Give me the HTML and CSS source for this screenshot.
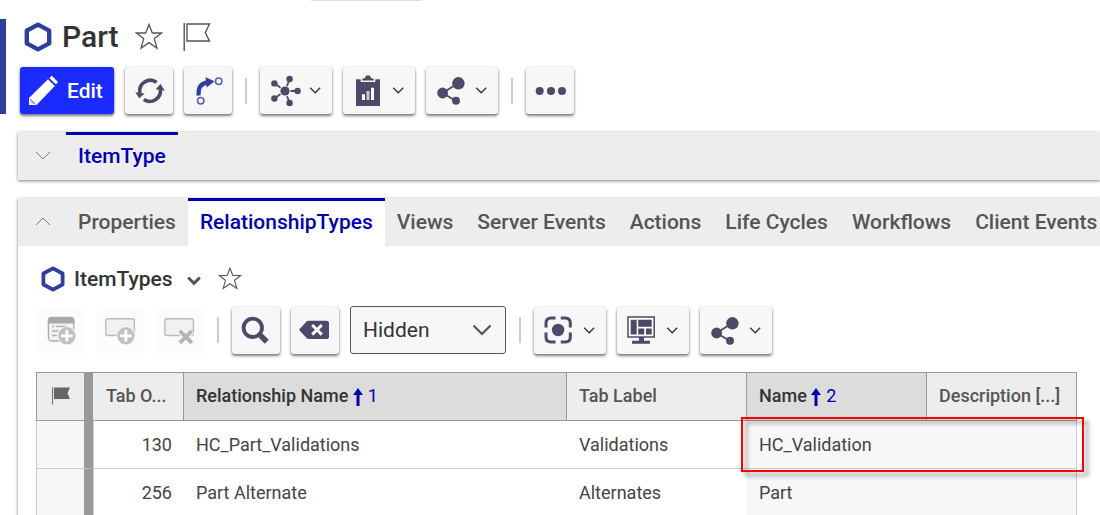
FILE: index.html
```html
<!DOCTYPE html>
<html lang="en">
<head>
<meta charset="utf-8">
<title>Part</title>
<link rel="stylesheet" href="styles.css">
</head>
<body>
<svg class="defs" aria-hidden="true">
  <symbol id="hexagon" viewBox="0 0 28 30"><path d="M14 2.6 25.2 8.6V21.4L14 27.4 2.8 21.4V8.6Z" fill="none" stroke="#303f9f" stroke-width="4.4" stroke-linejoin="round"/></symbol>
  <symbol id="star" viewBox="0 0 28 27"><path d="M14 1.5 17.3 10H26.7L19.3 15.6 22 25.2 14 19.6 6 25.2 8.7 15.6 1.3 10H10.7Z" fill="none" stroke="#555" stroke-width="1.3"/></symbol>
  <symbol id="share" viewBox="0 0 48 47"><path d="M32.5 16 16.5 26 30 34" fill="none" stroke="#4b4a68" stroke-width="1.8"/><g fill="#4b4a68"><circle cx="32.4" cy="16.3" r="6.2"/><circle cx="16.6" cy="26" r="5.4"/><circle cx="30" cy="33.7" r="4"/></g></symbol>
  <symbol id="chevron" viewBox="0 0 24 47"><path d="M2.2 20.8 7.2 25.8 12.2 20.8" fill="none" stroke="#333" stroke-width="1.3"/></symbol>
</svg>

<div class="window-edge"></div>

<header class="item-header">
  <div class="title-row">
    <svg class="title-hex"><use href="#hexagon"/></svg>
    <h1 class="title">Part</h1>
    <button class="plain title-star" aria-label="Favorite"><svg width="28" height="27"><use href="#star"/></svg></button>
    <button class="plain title-flag" aria-label="Flag"><svg width="28" height="28" viewBox="0 0 28 28"><path d="M1.2 0V28M4 1H26.5L22.3 9.5 26.5 18H4Z" fill="none" stroke="#555" stroke-width="1.4"/></svg></button>
  </div>
  <div class="toolbar">
    <button class="btn btn-primary"><svg class="icon" viewBox="0 0 48 47"><g fill="#fff"><path d="M9 38V31L28 12.3 34.8 19 16.5 38Z"/><path d="M29.4 11 31.8 8.8 38 15 36 17.6Z"/></g><path d="M10 32 15.4 37.2M11 34.6 13 36.6" stroke="#1b2bff" stroke-width=".8"/></svg><span class="btn-text">Edit</span></button>
    <button class="btn" aria-label="Refresh"><svg class="icon" viewBox="0 0 48 47"><g fill="none" stroke="#4b4a68" stroke-width="3.6"><path d="M14.9 26A10.6 10.6 0 0 1 31.6 15.4"/><path d="M35.3 22A10.6 10.6 0 0 1 18.8 32.4"/></g><path d="M10.3 25.2 19.8 26.6 14.2 31.2ZM30.6 22.3 35.6 17 39.8 23.8Z" fill="#4b4a68"/></svg></button>
    <button class="btn" aria-label="Promote"><svg class="icon" viewBox="0 0 48 47"><path d="M14.6 28.5C14 21 17 16.2 24 15.2" fill="none" stroke="#303f9f" stroke-width="4.2"/><path d="M21.5 10.2 30.6 14.2 22.6 20.5Z" fill="#303f9f"/><g fill="none" stroke="#5360bd" stroke-width="1.5"><circle cx="16.7" cy="33.7" r="3.2"/><circle cx="34.7" cy="14.2" r="3.2"/></g></svg></button>
    <span class="sep"></span>
    <button class="btn" aria-label="Structure"><svg class="icon" viewBox="0 0 48 47"><path d="M25 24 14.3 16.3M25 24 29.7 12M25 24H37.7M25 24 29.7 36M25 24 14.3 31.5" stroke="#4b4a68" stroke-width="1.8"/><circle cx="25" cy="24" r="5.6" fill="#f7f7f7"/><g fill="#4b4a68"><circle cx="25" cy="24" r="4.6"/><circle cx="14.4" cy="16.4" r="3.2"/><circle cx="29.6" cy="12" r="3.2"/><circle cx="37.6" cy="24" r="3.2"/><circle cx="29.6" cy="36" r="3.2"/><circle cx="14.4" cy="31.5" r="3.2"/></g></svg><svg class="caret"><use href="#chevron"/></svg></button>
    <button class="btn" aria-label="Reports"><svg class="icon" viewBox="0 0 48 47"><path d="M13 12.3H37V39H13Z" fill="#4b4a68"/><path d="M17.7 11.5H32.3V15H17.7Z" fill="#f7f7f7"/><path d="M19 13.6C19 11.2 21.5 11.8 22.2 10.6 22.6 7.6 27.4 7.6 27.8 10.6 28.5 11.8 31 11.2 31 13.6Z" fill="#4b4a68"/><path d="M19 27.3H22V33H19ZM28 20.7H31V33H28Z" fill="#fff"/><path d="M23.5 24H26.5V33H23.5Z" fill="#c9c8d4"/></svg><svg class="caret"><use href="#chevron"/></svg></button>
    <button class="btn" aria-label="Share"><svg class="icon"><use href="#share"/></svg><svg class="caret"><use href="#chevron"/></svg></button>
    <span class="sep"></span>
    <button class="btn" aria-label="More"><svg class="icon" viewBox="0 0 48 47"><g fill="#4b4a68"><circle cx="13.7" cy="24" r="4"/><circle cx="25" cy="24" r="4"/><circle cx="36" cy="24" r="4"/></g></svg></button>
  </div>
</header>

<section class="panel">
  <div class="tabs">
    <button class="plain toggle" aria-label="Expand"><svg width="16" height="10" viewBox="0 0 16 10"><path d="M1 1 8 8 15 1" fill="none" stroke="#777" stroke-width="1"/></svg></button>
    <button class="tab tab-active">ItemType</button>
  </div>
</section>

<section class="panel">
  <div class="tabs">
    <button class="plain toggle" aria-label="Collapse"><svg width="16" height="10" viewBox="0 0 16 10"><path d="M1 8 8 1 15 8" fill="none" stroke="#777" stroke-width="1"/></svg></button>
    <button class="tab">Properties</button>
    <button class="tab tab-active tab-open">RelationshipTypes</button>
    <button class="tab">Views</button>
    <button class="tab">Server Events</button>
    <button class="tab">Actions</button>
    <button class="tab">Life Cycles</button>
    <button class="tab">Workflows</button>
    <button class="tab">Client Events</button>
  </div>

  <div class="panel-body">
    <div class="sub-title-row">
      <svg class="sub-hex"><use href="#hexagon"/></svg>
      <h2 class="sub-title">ItemTypes</h2>
      <button class="plain sub-caret" aria-label="Menu"><svg width="14" height="10" viewBox="0 0 14 10"><path d="M1.2 1.5 7 7.3 12.8 1.5" fill="none" stroke="#555" stroke-width="3"/></svg></button>
      <button class="plain sub-star" aria-label="Favorite"><svg width="24" height="23"><use href="#star"/></svg></button>
    </div>

    <div class="toolbar sub-toolbar">
      <button class="btn" disabled aria-label="New item"><svg class="icon" viewBox="0 0 48 47"><rect x="10.4" y="11" width="25.4" height="23" rx="3.5" fill="#f2f2f2" stroke="#aaa" stroke-width="1.3"/><path d="M9.8 16.6V13.5Q9.8 9.7 13.5 9.7H32.7Q36.4 9.7 36.4 13.5V16.6Z" fill="#a9a9a9"/><path d="M14 19.5H16M18 19.5H29M14 24H21M14 28.5H19" stroke="#b0b0b0" stroke-width="1.5"/><circle cx="28.9" cy="28.8" r="9.6" fill="#fcfcfc"/><circle cx="28.9" cy="28.8" r="8.7" fill="#c1c1c1"/><path d="M28.9 23V34.6M23.1 28.8H34.7" stroke="#fff" stroke-width="2.8"/></svg></button>
      <button class="btn" disabled aria-label="Add row"><svg class="icon" viewBox="0 0 48 47"><rect x="8.8" y="11.7" width="28.6" height="16.8" rx="2" fill="#f1f1f1" stroke="#bbb" stroke-width="1.4"/><circle cx="28.9" cy="28.8" r="9.6" fill="#fcfcfc"/><circle cx="28.9" cy="28.8" r="8.7" fill="#c1c1c1"/><path d="M28.9 23V34.6M23.1 28.8H34.7" stroke="#fff" stroke-width="2.8"/></svg></button>
      <button class="btn" disabled aria-label="Delete row"><svg class="icon" viewBox="0 0 48 47"><rect x="8.8" y="11.7" width="28.6" height="16.8" rx="2" fill="#f1f1f1" stroke="#bbb" stroke-width="1.4"/><path d="M23.8 23.8 35.8 35.8M35.8 23.8 23.8 35.8" stroke="#fcfcfc" stroke-width="6.5"/><path d="M23.8 23.8 35.8 35.8M35.8 23.8 23.8 35.8" stroke="#b4b4b4" stroke-width="4"/></svg></button>
      <span class="sep"></span>
      <button class="btn" aria-label="Search"><svg class="icon" viewBox="0 0 48 47"><g fill="none" stroke="#4b4a68"><circle cx="20.8" cy="20.8" r="9.2" stroke-width="3.8"/><path d="M26.5 26.5 30 30" stroke-width="3.5"/><path d="M28.8 28.8 34.8 34.8" stroke-width="5.6"/></g></svg></button>
      <button class="btn" aria-label="Clear search"><svg class="icon" viewBox="0 0 48 47"><path d="M8 22.8 15.5 14.6Q16.5 13.7 18 13.7H35.5Q38 13.7 38 16.2V29.4Q38 31.9 35.5 31.9H18Q16.5 31.9 15.5 31Z" fill="#4b4a68"/><path d="M21.2 18 30.8 27.6M30.8 18 21.2 27.6" stroke="#fff" stroke-width="3"/></svg></button>
      <div class="select-box">
        <select class="select" aria-label="Search mode"><option>Hidden</option></select>
        <svg class="select-caret" viewBox="0 0 20 12"><path d="M1.5 1.5 10 10 18.5 1.5" fill="none" stroke="#555" stroke-width="2.2"/></svg>
      </div>
      <span class="sep"></span>
      <button class="btn" aria-label="Focus"><svg class="icon" viewBox="0 0 48 47"><path d="M12 20.5V16Q12 11 17 11H21.5M26.8 11H31.3Q36.3 11 36.3 16V20.5M36.3 25.5V30Q36.3 35 31.3 35H26.8M21.5 35H17Q12 35 12 30V25.5" fill="none" stroke="#4b4a68" stroke-width="3"/><circle cx="24.1" cy="23" r="6.2" fill="#4b4a68"/></svg><svg class="caret"><use href="#chevron"/></svg></button>
      <button class="btn" aria-label="Layout"><svg class="icon" viewBox="0 0 48 47"><rect x="11" y="10" width="26.2" height="20" fill="#fff" stroke="#4b4a68" stroke-width="1.5"/><path d="M13.7 12.7H19.7V27.5H13.7ZM21.2 12.7H34.7V19.8H21.2ZM21.2 21.6H27.2V27.5H21.2ZM29 21.6H34.7V27.5H29ZM22 30H27V34H22ZM15 33.7H33V36.7H15Z" fill="#4b4a68"/></svg><svg class="caret"><use href="#chevron"/></svg></button>
      <button class="btn" aria-label="Share"><svg class="icon"><use href="#share"/></svg><svg class="caret"><use href="#chevron"/></svg></button>
    </div>

    <div class="grid-wrap">
      <table class="grid">
        <colgroup><col class="col-flag"><col class="col-order"><col class="col-rel"><col class="col-label"><col class="col-name"><col></colgroup>
        <thead>
          <tr>
            <th class="flag-cell" aria-label="Flag"><svg class="grid-flag" viewBox="0 0 18 18"><path d="M.6 0V17.5" stroke="#666" stroke-width="1"/><path d="M2 .5H18L15.5 6.2 18 12H2Z" fill="#666"/></svg></th>
            <th>Tab O...</th>
            <th class="sorted">Relationship Name <span class="sort"><svg class="arrow" viewBox="0 0 10 18"><path d="M5 0 10 7H6.5V18H3.5V7H0Z" fill="#0000b3"/></svg>1</span></th>
            <th>Tab Label</th>
            <th class="sorted">Name <span class="sort"><svg class="arrow" viewBox="0 0 10 18"><path d="M5 0 10 7H6.5V18H3.5V7H0Z" fill="#0000b3"/></svg>2</span></th>
            <th>Description [...]</th>
          </tr>
        </thead>
        <tbody>
          <tr><td class="flag-cell"></td><td class="num">130</td><td>HC_Part_Validations</td><td>Validations</td><td class="shade">HC_Validation</td><td class="shade last"></td></tr>
          <tr><td class="flag-cell"></td><td class="num">256</td><td>Part Alternate</td><td>Alternates</td><td class="shade">Part</td><td class="shade last"></td></tr>
        </tbody>
      </table>
      <div class="highlight"></div>
    </div>
  </div>
</section>
</body>
</html>
```

FILE: styles.css
```css
* { box-sizing: border-box; }

body {
  margin: 0;
  background: #fff;
  color: #333;
  font-family: Roboto, "Liberation Sans", sans-serif;
  font-size: 21px;
  overflow: hidden;
}

button, select { font: inherit; color: inherit; }
h1, h2 { margin: 0; font-weight: 500; }
svg { display: block; flex: none; }
.defs { position: absolute; width: 0; height: 0; }

.window-edge {
  width: 110px;
  height: 1px;
  margin-left: 311px;
  background: #ddd;
}

.plain { border: 0; padding: 0; background: none; }

/* Item header */
.item-header {
  margin-top: 18px;
  padding-left: 14px;
  border-left: 6px solid #303f9f;
}
.title-row {
  display: flex;
  align-items: center;
  height: 36px;
  margin-bottom: 12px;
  padding-left: 4px;
}
.title-hex { width: 28px; height: 30px; }
.title { margin-left: 10px; font-size: 30px; line-height: 36px; }
.title-star { margin: 0 0 2px 17px; }
.title-flag { margin-left: 20px; }

/* Toolbars */
.toolbar { display: flex; align-items: center; gap: 11px; }
.btn {
  display: flex;
  align-items: center;
  flex: none;
  height: 47px;
  padding: 0;
  border: 0;
  border-radius: 3px;
  background: #f7f7f7;
  box-shadow: 0 2px 3px rgba(0, 0, 0, .5), 0 0 2px rgba(0, 0, 0, .2);
}
.btn:disabled { background: #fcfcfc; box-shadow: none; }
.btn-primary { background: #1b2bff; color: #fff; font-weight: 500; }
.btn-text { margin-left: -1px; padding-right: 11px; }
.icon { width: 48px; height: 47px; }
.caret { width: 24px; height: 47px; }
.sep { flex: none; width: 2px; height: 26px; margin: 0 2px; background: #ccc; }

/* Panels and tabs */
.panel {
  margin: 18px 0 0 18px;
  background: #fff;
  box-shadow: 0 1px 3px rgba(0, 0, 0, .5);
}
.tabs {
  display: flex;
  height: 48px;
  overflow: hidden;
  background: #ededed;
}
.toggle { display: grid; place-items: center; flex: none; width: 48px; padding-left: 2px; }
.tab {
  flex: none;
  padding: 0 12px 3px;
  border: 0;
  border-top: 3px solid transparent;
  background: none;
  color: #555;
  font-weight: 500;
  white-space: nowrap;
}
.tab-active { border-top-color: #0000b3; color: #0000b3; }
.tab-open { background: #fff; }

.panel-body { padding: 17px 23px 0 18px; }
.sub-title-row { display: flex; align-items: center; height: 32px; padding-left: 5px; }
.sub-hex { width: 24px; height: 26px; }
.sub-title { margin-left: 9px; font-size: 21px; line-height: 24px; }
.sub-caret { margin: 4px 0 0 14px; }
.sub-star { margin: 0 0 2px 17px; }
.sub-toolbar { margin-top: 11px; padding-left: 2px; }

.select-box { position: relative; width: 156px; height: 48px; }
.select {
  width: 100%;
  height: 100%;
  padding: 0 40px 0 12px;
  border: 1px solid #555;
  border-radius: 3px;
  background: #f7f7f7;
  appearance: none;
}
.select-caret {
  position: absolute;
  top: 18px;
  right: 14px;
  width: 20px;
  height: 12px;
  pointer-events: none;
}

/* Relationship grid */
.grid-wrap { position: relative; margin-top: 18px; }
.grid {
  width: 100%;
  border-spacing: 0;
  table-layout: fixed;
  font-size: 18px;
}
.col-flag { width: 57px; }
.col-order { width: 91px; }
.col-rel { width: 383px; }
.col-label, .col-name { width: 180px; }

.grid th, .grid td { padding: 0 12px; text-align: left; white-space: nowrap; }
.grid th {
  height: 49px;
  padding-bottom: 1px;
  border: 1px solid #999;
  border-left: 0;
  background: #ededed;
  color: #555;
  font-weight: 500;
  line-height: 24px;
}
.grid th:nth-child(2) { padding-left: 13px; }
.grid .sorted { background: #dcdcdc; color: #333; }
.grid td { height: 48px; border-bottom: 1px solid #ccc; color: #444; }
.grid .num { border-left: 1px solid #ccc; text-align: right; }
.grid .shade { background: #f7f7f7; }
.grid .last { border-right: 1px solid #ccc; }
.grid .flag-cell {
  border-left: 1px solid #ccc;
  border-right: 9px solid #999;
}
.grid td.flag-cell { background: #f7f7f7; }
.grid th.flag-cell { border-left-color: #999; }
.grid-flag { width: 18px; height: 18px; margin-left: 3px; }
.sort { color: #0000b3; font-weight: 400; }
.arrow {
  display: inline-block;
  width: 10px;
  height: 18px;
  margin-right: 5px;
  vertical-align: -4px;
}

/* Marks the related item of the first row */
.highlight {
  position: absolute;
  top: 45px;
  left: 705px;
  right: -7px;
  height: 55px;
  border: 2px solid #f00;
  filter: drop-shadow(4px 4px 2px rgba(0, 0, 0, .45));
}
```
